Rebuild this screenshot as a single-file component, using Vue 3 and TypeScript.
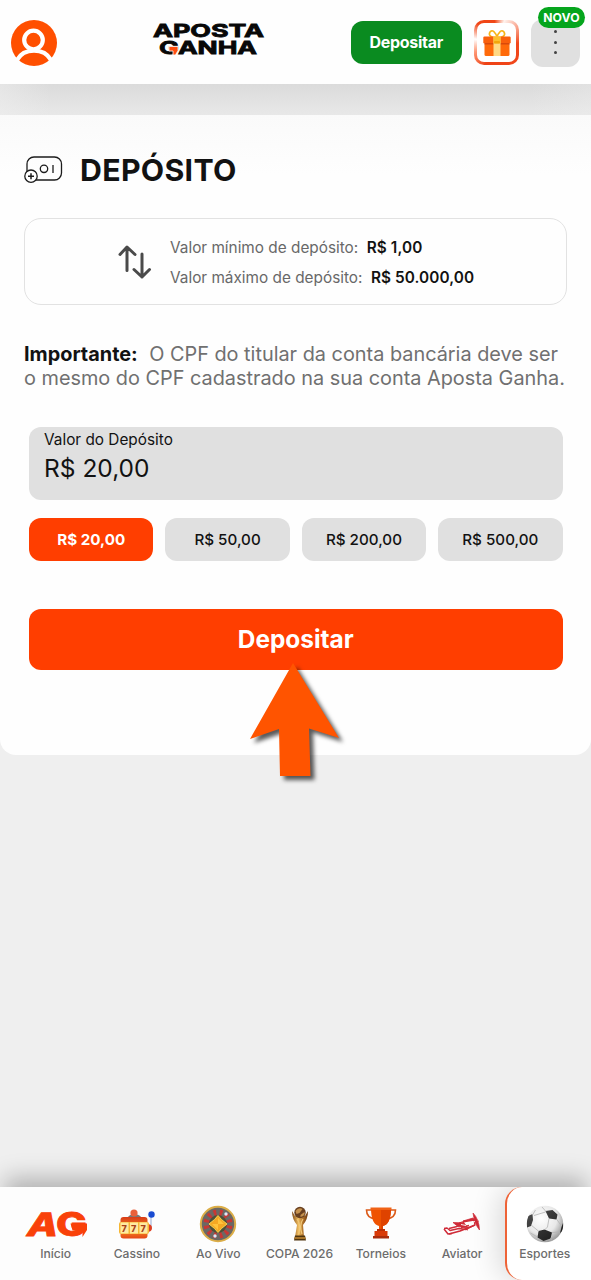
<script setup lang="ts">
import { ref } from 'vue'

interface Tab { id: string; label: string }

const amounts: string[] = ['20,00', '50,00', '200,00', '500,00']
const selected = ref<string>('20,00')
const limits = [
  { label: 'Valor mínimo de depósito:', value: 'R$ 1,00' },
  { label: 'Valor máximo de depósito:', value: 'R$ 50.000,00' },
]
const tabs: Tab[] = [
  { id: 'home', label: 'Início' },
  { id: 'casino', label: 'Cassino' },
  { id: 'live', label: 'Ao Vivo' },
  { id: 'cup', label: 'COPA 2026' },
  { id: 'trophy', label: 'Torneios' },
  { id: 'plane', label: 'Aviator' },
  { id: 'ball', label: 'Esportes' },
]
const spokes: number[] = Array.from({ length: 12 }, (_, i) => i * 30 + 15)
</script>

<template>
  <div class="app">
    <header class="header">
      <svg class="avatar" viewBox="0 0 46 46">
        <circle cx="23" cy="23" r="23" fill="#ff4f00" />
        <circle cx="22.500" cy="20" r="9.300" fill="none" stroke="#fff" stroke-width="4.200" />
        <path d="M6 40C13 27.500 33 27.500 40 40" fill="none" stroke="#fff" stroke-width="4.200" />
      </svg>
      <svg class="brand" viewBox="0 0 114 36">
        <text class="brand-text">
          <tspan x="1" y="14.700" textLength="111" lengthAdjust="spacingAndGlyphs">APOSTA</tspan>
          <tspan x="7" y="32.300" textLength="98" lengthAdjust="spacingAndGlyphs">GANHA</tspan>
        </text>
        <path d="M17 24.500h9v4l-2.500 4.500h-2.500v-4h-4z" fill="#ff4f10" stroke="#fefefe" stroke-width=".8" />
      </svg>
      <button class="cta">Depositar</button>
      <div class="gift">
        <svg viewBox="0 0 28 28">
          <path d="M14 9C8 9 5 6 7 3s6 0 7 6c1-6 5-9 7-6s-1 6-7 6Z" fill="none" stroke="#f7b516" stroke-width="1.600" />
          <rect x="1.500" y="14" width="25" height="13" rx="1.500" fill="#ff6a0a" />
          <rect x=".3" y="7.500" width="27.400" height="7" rx="1.200" fill="#f95f0c" />
          <path d="M1.500 14h25v1.500h-25z" fill="#d9490a" />
          <rect x="10.500" y="7.500" width="7" height="19.500" fill="#ffd984" />
          <rect x="10.500" y="7.500" width="7" height="7" fill="#fcc02d" />
          <rect x="11" y="12" width="6" height="2.500" rx="1" fill="#f2a50b" />
        </svg>
      </div>
      <div class="more">
        <span class="badge">NOVO</span>
        <i /><i /><i />
      </div>
    </header>
    <div class="strip" />

    <main class="card">
      <div class="title">
        <svg width="40" height="28" viewBox="0 0 40 28" fill="none" stroke="#1c1c1c" stroke-width="1.300">
          <rect x="3" y="1" width="34.500" height="23" rx="7" />
          <circle cx="20" cy="12.800" r="3.700" />
          <path d="M29 9v8" />
          <circle cx="7" cy="20.200" r="6.200" fill="#fff" />
          <path d="M4 20.200h6M7 17.200v6" stroke-width="1.500" />
        </svg>
        <h1>DEPÓSITO</h1>
      </div>

      <section class="limits">
        <svg width="34" height="34" viewBox="0 0 34 34" fill="none" stroke="#4a4a4a" stroke-width="3" stroke-linecap="round" stroke-linejoin="round">
          <path d="M9 25.500V2.500M2 9.500l7-7.500 8 7.500" />
          <path d="M24 9v23M16 24.500l8 7.500 7.500-7.500" />
        </svg>
        <div class="rows">
          <p v-for="l in limits" :key="l.label"><span>{{ l.label }}</span><b>{{ l.value }}</b></p>
        </div>
      </section>

      <p class="notice">
        <b>Importante:</b><span class="first">O CPF do titular da conta bancária deve ser</span><br />
        <span class="second">o mesmo do CPF cadastrado na sua conta Aposta Ganha.</span>
      </p>

      <section class="form">
        <div class="field">
          <label>Valor do Depósito</label>
          <div class="value">R$ {{ selected }}</div>
        </div>
        <div class="chips">
          <button v-for="a in amounts" :key="a" :class="{ on: a === selected }" @click="selected = a">R$ {{ a }}</button>
        </div>
        <div class="submit-wrap">
          <button class="submit">Depositar</button>
          <svg class="pointer" width="120" height="140" viewBox="0 0 120 140">
            <path d="M53 4 99 79 69 69.500 70.500 117H40L39 70 10 80Z" fill="#ff5400" />
          </svg>
        </div>
      </section>
    </main>

    <nav class="nav">
      <a v-for="t in tabs" :key="t.id" class="tab" :class="{ active: t.id === 'ball' }">
        <span class="icon">
          <svg v-if="t.id === 'home'" width="64" height="40" viewBox="0 0 64 40">
            <g class="ag">
              <text x="0" y="0" textLength="31" lengthAdjust="spacingAndGlyphs" transform="translate(1 31.800) skewX(-14)">A</text>
              <text x="32" y="31.800" textLength="31" lengthAdjust="spacingAndGlyphs">G</text>
            </g>
            <path d="M46.500 19.500H63V26l-4.500 7v-6.500h-10z" fill="#f94109" />
          </svg>
          <svg v-else-if="t.id === 'casino'" width="40" height="40" viewBox="0 0 40 40">
            <defs>
              <linearGradient id="slot" x2="0" y2="1"><stop stop-color="#d93b17" /><stop offset=".6" stop-color="#f48a21" /><stop offset="1" stop-color="#e54618" /></linearGradient>
            </defs>
            <path d="M34 9v16" stroke="#a9b9db" stroke-width="1.200" />
            <circle cx="34.500" cy="10.500" r="3.200" fill="#194bd1" />
            <path d="M30 20q5 0 5 4t-5 4z" fill="#df3f23" />
            <path d="M11 14c0-5 13-5 13 0z" fill="#777" />
            <circle cx="17" cy="9" r="3.600" fill="#e9603a" />
            <rect x="3.500" y="13" width="27" height="21.500" rx="3" fill="url(#slot)" />
            <rect x="2" y="18" width="30" height="12" rx="2" fill="#f6b632" />
            <path d="M3.500 18.500h8v11h-8zm9.500 0h8v11h-8zm9.500 0h8v11h-8z" fill="#ffe9a0" />
            <g class="sevens"><text x="4.500" y="27.600">7</text><text x="14" y="27.600">7</text><text x="23.500" y="27.600">7</text></g>
          </svg>
          <svg v-else-if="t.id === 'live'" width="40" height="40" viewBox="0 0 40 40">
            <circle cx="20" cy="20" r="17.200" fill="#6b6864" stroke="#dcae48" stroke-width="2" />
            <path v-for="s in spokes" :key="s" d="M20 20 18.300 5.500h3.400z" fill="#c93733" :transform="`rotate(${s} 20 20)`" />
            <circle cx="20" cy="20" r="9" fill="#4d5038" />
            <path d="m20 11.500 3.500 4 5.500 4.500-5.500 4.500-3.500 4-3.500-4L11 20l5.500-4.500z" fill="#f5a823" stroke="#f9d250" />
            <path d="m20 14 6 6h-6zm-6 6h6v6z" fill="#ffc43c" />
            <circle cx="28" cy="10" r="1.700" fill="#dce9fa" /><circle cx="17" cy="32" r="1.700" fill="#dce9fa" />
          </svg>
          <svg v-else-if="t.id === 'cup'" width="24" height="40" viewBox="0 0 24 40">
            <defs><linearGradient id="gold"><stop stop-color="#804b18" /><stop offset=".4" stop-color="#f0bd60" /><stop offset=".7" stop-color="#ad6e27" /><stop offset="1" stop-color="#66350f" /></linearGradient></defs>
            <path d="M4 7q0 8 5 14l-2 12-1 2h12l-2-2-1-12q5-6 5-14l-3 5H7z" fill="url(#gold)" />
            <circle cx="12" cy="8.500" r="5.700" fill="#694020" />
            <path d="M7.500 7q3-4 7-2l-3 4-3 1zm5 4 4-3q1 4-4 5z" fill="#c6924e" />
            <path d="M9 15q4 5 2 15M15 15q-4 6-1 15" fill="none" stroke="#f0c878" stroke-width="1.200" />
            <path d="M7 31.500h10l1 5H6z" fill="#50350f" /><path d="M6.500 34h11" stroke="#d79839" stroke-width="1.300" />
          </svg>
          <svg v-else-if="t.id === 'trophy'" width="36" height="40" viewBox="0 0 36 40">
            <path d="M9 6H3.500q0 8 9 9M27 6h5.500q0 8-9 9" fill="none" stroke="#db5a18" stroke-width="1.600" />
            <path d="M8 4h20q0 16-8 18v6h-4v-6Q8 20 8 4Z" fill="#ef5200" />
            <path d="M18 4h10q0 16-8 18v6h-2z" fill="#df4300" />
            <path d="M7.500 3.500h21V6h-21z" fill="#f06216" />
            <path d="M14 25h8v3h-8z" fill="#b92e05" /><path d="M11.500 27h13v5h-13z" fill="#d93a08" /><path d="M10 32h16v2.500H10z" fill="#a92c0c" />
          </svg>
          <svg v-else-if="t.id === 'plane'" width="38" height="40" viewBox="0 0 38 40" fill="none" stroke="#cf2b38" stroke-linejoin="round">
            <path d="m1 24.500 3-.5 3 2.500 9-2 7 1 9-4.500-1-5-9 1.500-8 5-8 2" stroke-width="1.300" />
            <path d="m6 30 11-3 15-6" stroke-width="1.800" />
            <path d="m1 25 4 5 4-.5" stroke-width="1.500" />
            <path d="m10 18.500 11 .5 4 5-10-1.500zM20 17l10-3 1.500 2z" fill="#cf2b38" stroke-width=".8" />
            <path d="m16 19 8-2.500m-6 7 8-2M22 25l3 1" stroke-width="1.300" />
            <path d="M30 9q6 6 6.500 17-5-6-6.500-17Zm1 10 5-2" fill="#cf2b38" stroke-width=".7" />
            <path d="m18 20.500 5 1m6-3 3-1" stroke="#fdfdfd" stroke-width=".9" />
          </svg>
          <svg v-else width="40" height="40" viewBox="0 0 40 40">
            <defs>
              <radialGradient id="ball" cx=".4" cy=".35" r=".65"><stop stop-color="#fff" /><stop offset=".65" stop-color="#e8e8e8" /><stop offset="1" stop-color="#a0a0a0" /></radialGradient>
              <linearGradient id="patch" x2="1" y2="1"><stop stop-color="#505050" /><stop offset="1" stop-color="#151515" /></linearGradient>
              <clipPath id="ball-clip"><circle cx="20" cy="20" r="18.300" /></clipPath>
            </defs>
            <circle cx="20" cy="20" r="18.300" fill="url(#ball)" />
            <g clip-path="url(#ball-clip)">
              <path d="m20.500 7 7-1 5 4.500-1 5-7.500-1zM1 13l6.500-3 .5 6-2 6-4 1.500zM13.500 27l6-1.500 7.500 3-1.500 6-7 2.500-6-3.500zM38 19l-1.500 4-1.500 6 4-3z" fill="url(#patch)" />
              <path d="M21 7.500 17 3M20.500 8 9 11.500M24 14.500 22.500 23l-3 3M6 21l8 6.500M7.500 11l3-5M31.500 15l5 7M27 28.500l8-.5M12.500 33l-7-4M25.500 34l2 3" fill="none" stroke="#b2b2b2" stroke-width=".8" />
            </g>
          </svg>
        </span>
        <span class="name">{{ t.label }}</span>
      </a>
    </nav>
  </div>
</template>

<style>
body { margin: 0; background: #efefef; }
</style>

<style scoped>
* { box-sizing: border-box; }
.app { width: 591px; height: 1280px; display: flex; flex-direction: column; overflow: hidden; background: #efefef; font-family: Inter, "Liberation Sans", sans-serif; color: #121212; }
button { border: 0; padding: 0; font-family: inherit; color: inherit; }
p, h1 { margin: 0; }
svg { display: block; flex: none; }
.header { height: 84px; flex: none; background: #fefefe; display: flex; align-items: flex-start; }
.avatar { width: 46px; height: 46px; margin: 20px 0 0 11px; }
.brand { width: 114px; height: 36px; margin: 22px 0 0 95px; overflow: visible; }
.brand-text { font-size: 17.900px; font-weight: 700; fill: #080808; stroke: #080808; stroke-width: .8px; }
.cta { width: 110.500px; height: 43px; margin: 20.500px 0 0 85px; border-radius: 12px; background: #0a8b20; color: #fff; font-size: 16px; font-weight: 700; letter-spacing: -.3px; }
.gift { width: 45px; height: 45px; margin: 19.500px 0 0 12.500px; border-radius: 10px; padding: 3px; background: conic-gradient(from 20deg, #fff3ee, #f2481c 20%, #ee4215 52%, #ff9a78 63%, #fff 72%, #f04616 82%, #f04616 93%, #fff3ee); }
.gift::before { content: ""; display: block; width: 39px; height: 39px; background: #fff; border-radius: 7px; }
.gift svg { width: 28px; height: 28px; margin: -33px auto 0; }
.more { width: 49px; height: 48px; margin: 19px 0 0 12px; padding-top: 11px; border-radius: 12px; background: #e0e0e0; position: relative; display: flex; flex-direction: column; align-items: center; gap: 7.500px; }
.more i { width: 3px; height: 3px; border-radius: 50%; background: #424242; }
.badge { position: absolute; left: 7px; top: -12px; width: 47px; height: 21px; border-radius: 11px; background: #05a51d; color: #fff; font-size: 12.200px; line-height: 21px; text-align: center; font-weight: 700; letter-spacing: .1px; }
.strip { height: 31px; flex: none; background: linear-gradient(90deg, rgba(239, 239, 239, .5), rgba(239, 239, 239, 0) 50px 530px, rgba(239, 239, 239, .3)), linear-gradient(#dbdbdb, #e8e8e8); }
.card { height: 639.500px; flex: none; padding: 35px 24px 0; background: linear-gradient(#fafafa, #fefefe 60px); border-radius: 0 0 16px 16px; }
.title { height: 39px; display: flex; align-items: center; gap: 16px; }
h1 { font-size: 30.300px; line-height: 38px; font-weight: 700; letter-spacing: .3px; }
.limits { height: 87px; margin-top: 29px; border: 1.500px solid #e2e2e2; border-radius: 17px; display: flex; padding: 26px 0 0 93px; gap: 18px; }
.rows { margin-top: -13.500px; }
.rows p { height: 30.500px; line-height: 31px; font-size: 15.350px; color: #686868; display: flex; gap: 8.500px; white-space: nowrap; }
.rows b { font-weight: 600; color: #121212; letter-spacing: .08px; }
.notice { margin-top: 36.500px; font-size: 19.880px; line-height: 24.500px; color: #707070; white-space: nowrap; }
.notice b { font-weight: 700; color: #121212; }
.first { margin-left: 11.500px; }
.form { margin: 36.500px 4.500px 0 5px; }
.field { height: 73px; border-radius: 12px; background: #e0e0e0; padding: 4px 15px; }
.field label { display: block; font-size: 15.350px; line-height: 18px; }
.value { font-size: 24.500px; line-height: 38px; }
.chips { margin-top: 18px; display: grid; grid-template-columns: repeat(4, 1fr); gap: 12px; }
.chips button { height: 42.500px; border-radius: 12px; background: #e0e0e0; font-size: 15.200px; font-weight: 500; }
.chips .on { background: #ff3e00; color: #fff; font-weight: 700; }
.submit-wrap { position: relative; margin-top: 48.500px; }
.submit { display: block; width: 100%; height: 60.500px; border-radius: 12px; background: #ff3e00; color: #fff; font-size: 24.400px; font-weight: 700; }
.pointer { position: absolute; left: 211px; top: 50px; filter: drop-shadow(4px 4px 2px rgba(0, 0, 0, .65)); }
.nav { margin-top: auto; height: 93px; flex: none; background: #fdfdfd; display: flex; padding-left: 15px; box-shadow: 0 -14px 22px -5px rgba(0, 0, 0, .26); }
.tab { width: 81.300px; flex: none; display: flex; flex-direction: column; align-items: center; padding-top: 17px; }
.tab.active { width: 100px; margin-left: 2px; align-items: flex-start; border-left: 2px solid #ee6337; border-radius: 17px 0 0 17px; background: #fff; box-shadow: -6px 0 28px rgba(0, 0, 0, .14); clip-path: inset(0 0 0 -45px); }
.icon { height: 40px; display: flex; justify-content: center; }
.active .icon, .active .name { width: 76px; text-align: center; }
.name { font-size: 12.100px; line-height: 18px; margin-top: 1px; font-weight: 500; color: #6c6c6c; white-space: nowrap; }
.ag { font-size: 32px; font-weight: 800; fill: #f94109; stroke: #f94109; stroke-width: .8px; }
.sevens { font-size: 9px; font-weight: 800; fill: #a8421a; }
</style>
